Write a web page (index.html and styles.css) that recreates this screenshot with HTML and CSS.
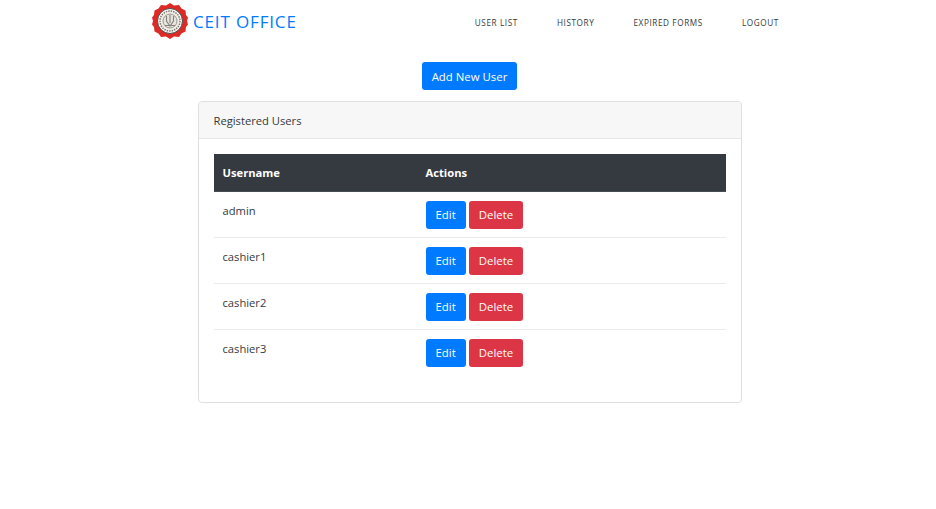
FILE: index.html
```html
<!DOCTYPE html>
<html lang="en">
<head>
    <meta charset="UTF-8">
    <meta name="viewport" content="width=device-width, initial-scale=1.0">
    <title>CEIT Office</title>
    <link rel="stylesheet" href="styles.css">
</head>
<body>

    <nav class="navbar">
        <a class="brand" href="#">
            <svg class="logo" viewBox="0 0 38 38" width="38" height="38">
                <path fill="#dc2a26" d="M19 1l4 2.500 5-.5 2.500 3.500 4 2 .5 4.500 2 2.500-1 3.500 1 3.500-2 2.500-.5 4.500-4 2-2.500 3.500-5-.5-4 2.500-4-2.500-5 .5-2.500-3.500-4-2-.5-4.500-2-2.500 1-3.500-1-3.500 2-2.500.5-4.500 4-2 2.500-3.500 5 .5z"/>
                <circle cx="19" cy="19" r="12.500" fill="#fbfaf6" stroke="#4d4a46" stroke-width="1"/>
                <circle cx="19" cy="19" r="10" fill="#f1eee8" stroke="#7c7871" stroke-width="1.500" stroke-dasharray="1.500 1"/>
                <circle cx="19" cy="19" r="7" fill="#e7e4dd" stroke="#85817a" stroke-width=".8"/>
                <path fill="none" stroke="#85817a" stroke-width="1.100" d="M15.500 14v5l3.500 5 3.500-5v-5M19 13v8M14 23.500h10"/>
            </svg>
            <span class="brand-name">CEIT OFFICE</span>
        </a>
        <ul class="nav-links">
            <li><a href="#">User List</a></li>
            <li><a href="#">History</a></li>
            <li><a href="#">Expired Forms</a></li>
            <li><a href="#">Logout</a></li>
        </ul>
    </nav>

    <main class="content">
        <button class="btn btn-primary btn-add">Add New User</button>

        <div class="card">
            <div class="card-header">Registered Users</div>
            <div class="card-body">
                <table class="users">
                    <thead>
                        <tr>
                            <th class="col-name">Username</th>
                            <th>Actions</th>
                        </tr>
                    </thead>
                    <tbody>
                        <tr>
                            <td>admin</td>
                            <td class="actions"><button class="btn btn-primary">Edit</button><button class="btn btn-danger">Delete</button></td>
                        </tr>
                        <tr>
                            <td>cashier1</td>
                            <td class="actions"><button class="btn btn-primary">Edit</button><button class="btn btn-danger">Delete</button></td>
                        </tr>
                        <tr>
                            <td>cashier2</td>
                            <td class="actions"><button class="btn btn-primary">Edit</button><button class="btn btn-danger">Delete</button></td>
                        </tr>
                        <tr>
                            <td>cashier3</td>
                            <td class="actions"><button class="btn btn-primary">Edit</button><button class="btn btn-danger">Delete</button></td>
                        </tr>
                    </tbody>
                </table>
            </div>
        </div>
    </main>

</body>
</html>
```

FILE: styles.css
```css
* {
    margin: 0;
    padding: 0;
    box-sizing: border-box;
}
body {
    font-family: "Open Sans", "Noto Sans", Arial, sans-serif;
    font-size: 11.2px;
    color: #212529;
    background-color: #fff;
}
a {
    text-decoration: none;
}
.navbar {
    height: 42px;
    padding-left: 151px;
    display: flex;
    align-items: center;
}
.brand {
    display: flex;
    align-items: center;
    gap: 4px;
}
.brand-name {
    font-size: 17px;
    letter-spacing: 0.85px;
    color: #007bff;
}
.nav-links {
    list-style: none;
    display: flex;
    margin-left: 178px;
    gap: 39px;
}
.nav-links a {
    font-size: 8.2px;
    letter-spacing: 0.6px;
    text-transform: uppercase;
    color: #343a40;
}
.content {
    display: flex;
    flex-direction: column;
    align-items: center;
    padding: 20px 0 0 3px;
}
.btn {
    font-family: inherit;
    font-size: 11.4px;
    height: 28px;
    padding: 0 10px;
    border: none;
    border-radius: 3px;
    color: #fff;
    cursor: pointer;
}
.btn-primary {
    background-color: #007bff;
}
.btn-danger {
    background-color: #dc3545;
    margin-left: 3px;
}
.btn-add {
    margin-bottom: 11px;
}
.card {
    width: 544px;
    height: 302px;
    border: 1px solid #dfdfdf;
    border-radius: 4px;
}
.card-header {
    height: 37px;
    padding: 0 15px;
    display: flex;
    align-items: center;
    background-color: #f7f7f7;
    border-bottom: 1px solid #e6e6e6;
    border-radius: 4px 4px 0 0;
    color: #343a40;
}
.card-body {
    padding: 15px;
}
.users {
    width: 100%;
    border-collapse: collapse;
}
.users th {
    height: 37px;
    padding: 0 9px;
    text-align: left;
    font-weight: 700;
    color: #fff;
    background-color: #343a40;
    border-bottom: 1px solid #454d55;
}
.col-name {
    width: 203px;
}
.users td {
    height: 46px;
    padding: 11px 9px 0;
    vertical-align: top;
    color: #343a40;
    border-top: 1px solid #e9ecef;
}
.users tbody tr:first-child td {
    border-top: none;
}
.users td.actions {
    padding-top: 9px;
}
```
